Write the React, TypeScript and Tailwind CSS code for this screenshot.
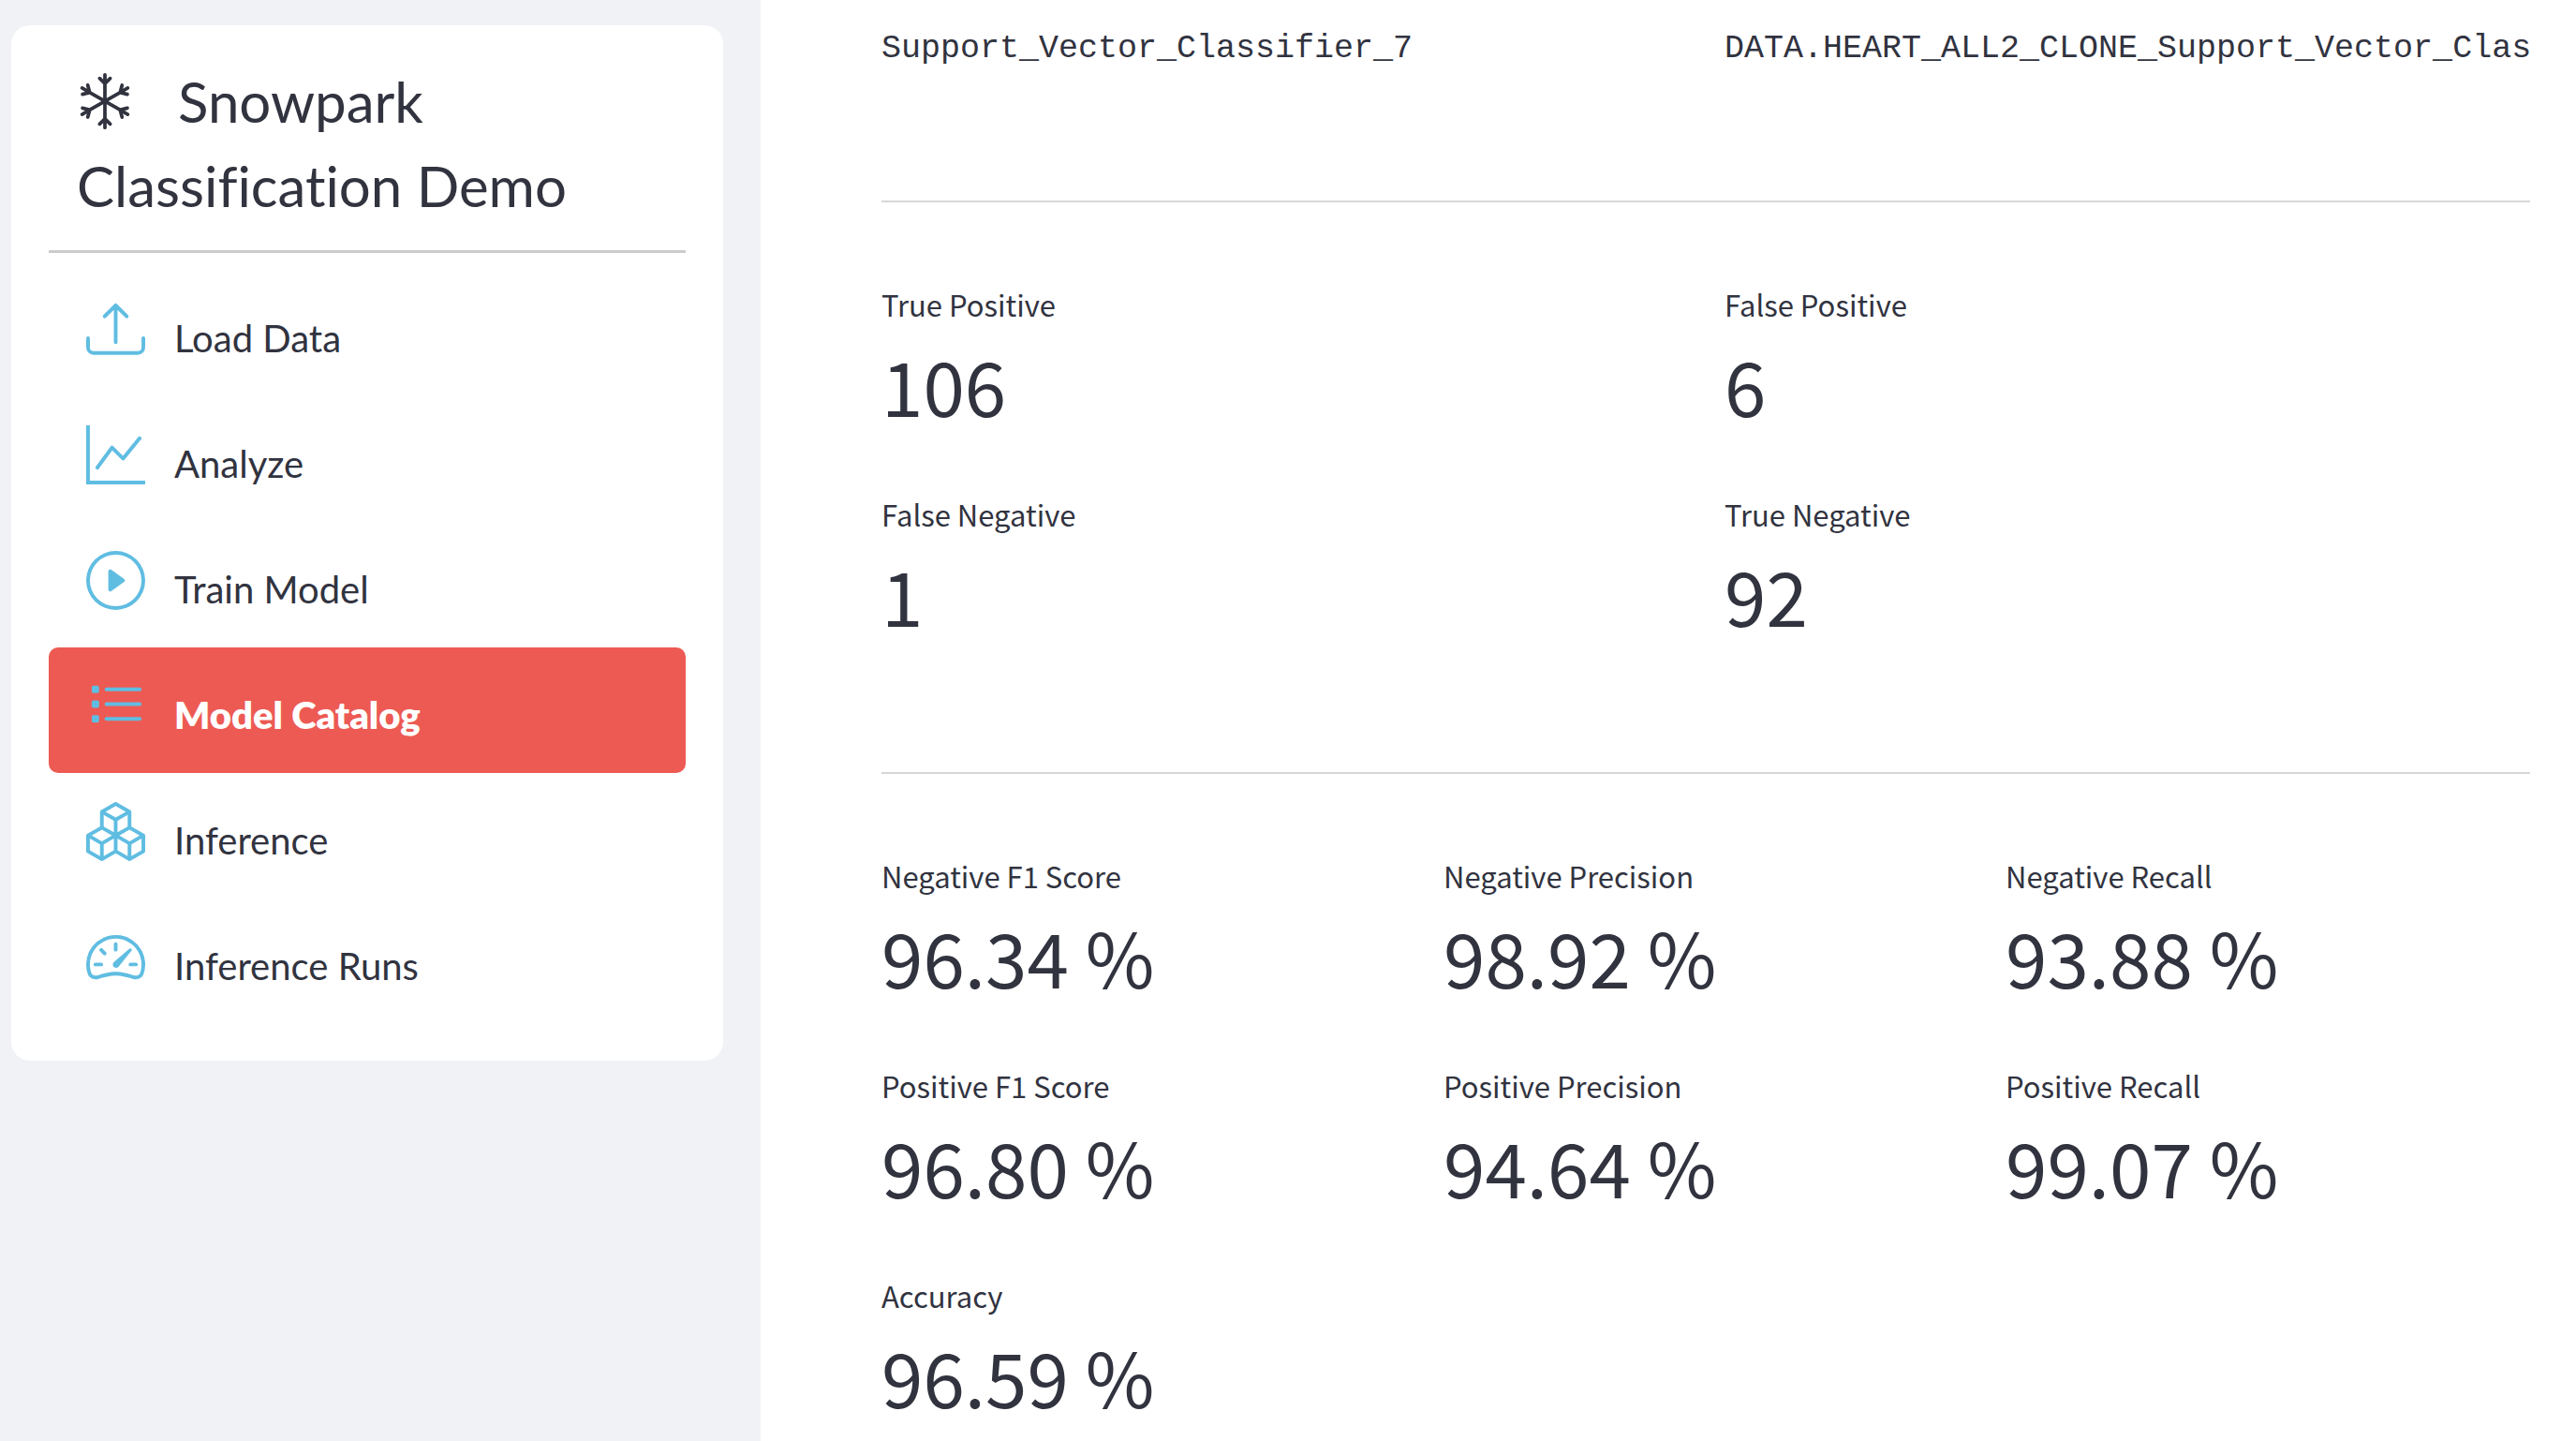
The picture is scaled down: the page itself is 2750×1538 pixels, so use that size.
import type { ComponentType, ReactNode, SVGProps } from "react";
import {
  BsBoxes,
  BsGraphUp,
  BsPlayCircle,
  BsSnow,
  BsSpeedometer2,
  BsUpload,
} from "react-icons/bs";

type NavItem = {
  label: string;
  icon: ComponentType<SVGProps<SVGSVGElement>>;
  active?: boolean;
};
type MetricData = { label: string; value: string };

function ListIcon(props: SVGProps<SVGSVGElement>) {
  return (
    <svg viewBox="0 0 16 16" fill="currentColor" {...props}>
      {[3.5, 7.5, 11.5].map((y) => (
        <g key={y}>
          <rect x="1.5" y={y - 1} width="2" height="2" rx="0.5" />
          <rect x="5" y={y - 0.5} width="10" height="1" rx="0.5" />
        </g>
      ))}
    </svg>
  );
}

const navItems: NavItem[] = [
  { label: "Load Data", icon: BsUpload },
  { label: "Analyze", icon: BsGraphUp },
  { label: "Train Model", icon: BsPlayCircle },
  { label: "Model Catalog", icon: ListIcon, active: true },
  { label: "Inference", icon: BsBoxes },
  { label: "Inference Runs", icon: BsSpeedometer2 },
];

const confusion: MetricData[] = [
  { label: "True Positive", value: "106" },
  { label: "False Positive", value: "6" },
  { label: "False Negative", value: "1" },
  { label: "True Negative", value: "92" },
];

const scores: MetricData[] = [
  { label: "Negative F1 Score", value: "96.34 %" },
  { label: "Negative Precision", value: "98.92 %" },
  { label: "Negative Recall", value: "93.88 %" },
  { label: "Positive F1 Score", value: "96.80 %" },
  { label: "Positive Precision", value: "94.64 %" },
  { label: "Positive Recall", value: "99.07 %" },
  { label: "Accuracy", value: "96.59 %" },
];

function NavLink({ label, icon: Icon, active }: NavItem) {
  const tone = active
    ? "bg-[#ed5a53] font-extrabold text-white"
    : "font-normal text-[#31333f]";
  return (
    <li>
      <a
        href="#"
        aria-current={active ? "page" : undefined}
        className={`flex h-[134px] items-start gap-[31px] rounded-[10px] pl-10 pt-[31px] text-[40px] leading-[82px] ${tone}`}
      >
        <Icon className="size-[63px] shrink-0 text-[#60bde2]" aria-hidden="true" />
        <span>{label}</span>
      </a>
    </li>
  );
}

function Sidebar() {
  return (
    <aside className="w-[812px] shrink-0 bg-[#f0f2f6] pl-3 pr-10 pt-[27px] font-['Lato',sans-serif] [font-variant-ligatures:none]">
      <div className="rounded-[20px] bg-white px-10 pb-[39px] pt-9">
        <h1 className="flex flex-wrap items-center pl-[30px] text-[60px] font-normal leading-[90px] text-[#31333f]">
          <BsSnow className="mr-12 size-[60px]" aria-hidden="true" />
          <span>Snowpark</span>
          <span className="basis-full">Classification Demo</span>
        </h1>
        <hr className="mb-[19px] mt-6 border-t-[3px] border-[#cccccc]" />
        <nav>
          <ul>
            {navItems.map((item) => (
              <NavLink key={item.label} {...item} />
            ))}
          </ul>
        </nav>
      </div>
    </aside>
  );
}

function Metric({ label, value }: MetricData) {
  return (
    <div>
      <dt className="text-[31px] leading-[58px]">{label}</dt>
      <dd className="text-[80px] leading-[112px]">{value}</dd>
    </div>
  );
}

function Divider() {
  return <hr className="mb-20 mt-[134px] border-t-2 border-[#d6d6d8]" />;
}

function ModelName({ children }: { children: ReactNode }) {
  return (
    <p className="whitespace-nowrap font-['Liberation_Mono',monospace] text-[35px] leading-[56px]">
      {children}
    </p>
  );
}

export default function App() {
  return (
    <div className="flex h-screen overflow-hidden bg-white">
      <Sidebar />
      <main className="min-w-0 flex-1 pl-[129px] pr-[49px] pt-6 font-['Noto_Sans_CJK_SC',sans-serif] text-[#31333f]">
        <div className="grid grid-cols-2 gap-10">
          <ModelName>Support_Vector_Classifier_7</ModelName>
          <ModelName>DATA.HEART_ALL2_CLONE_Support_Vector_Clas</ModelName>
        </div>
        <Divider />
        <dl className="grid grid-cols-2 gap-x-10 gap-y-[54px]">
          {confusion.map((m) => (
            <Metric key={m.label} {...m} />
          ))}
        </dl>
        <Divider />
        <dl className="grid grid-cols-3 gap-x-10 gap-y-[54px]">
          {scores.map((m) => (
            <Metric key={m.label} {...m} />
          ))}
        </dl>
      </main>
    </div>
  );
}
